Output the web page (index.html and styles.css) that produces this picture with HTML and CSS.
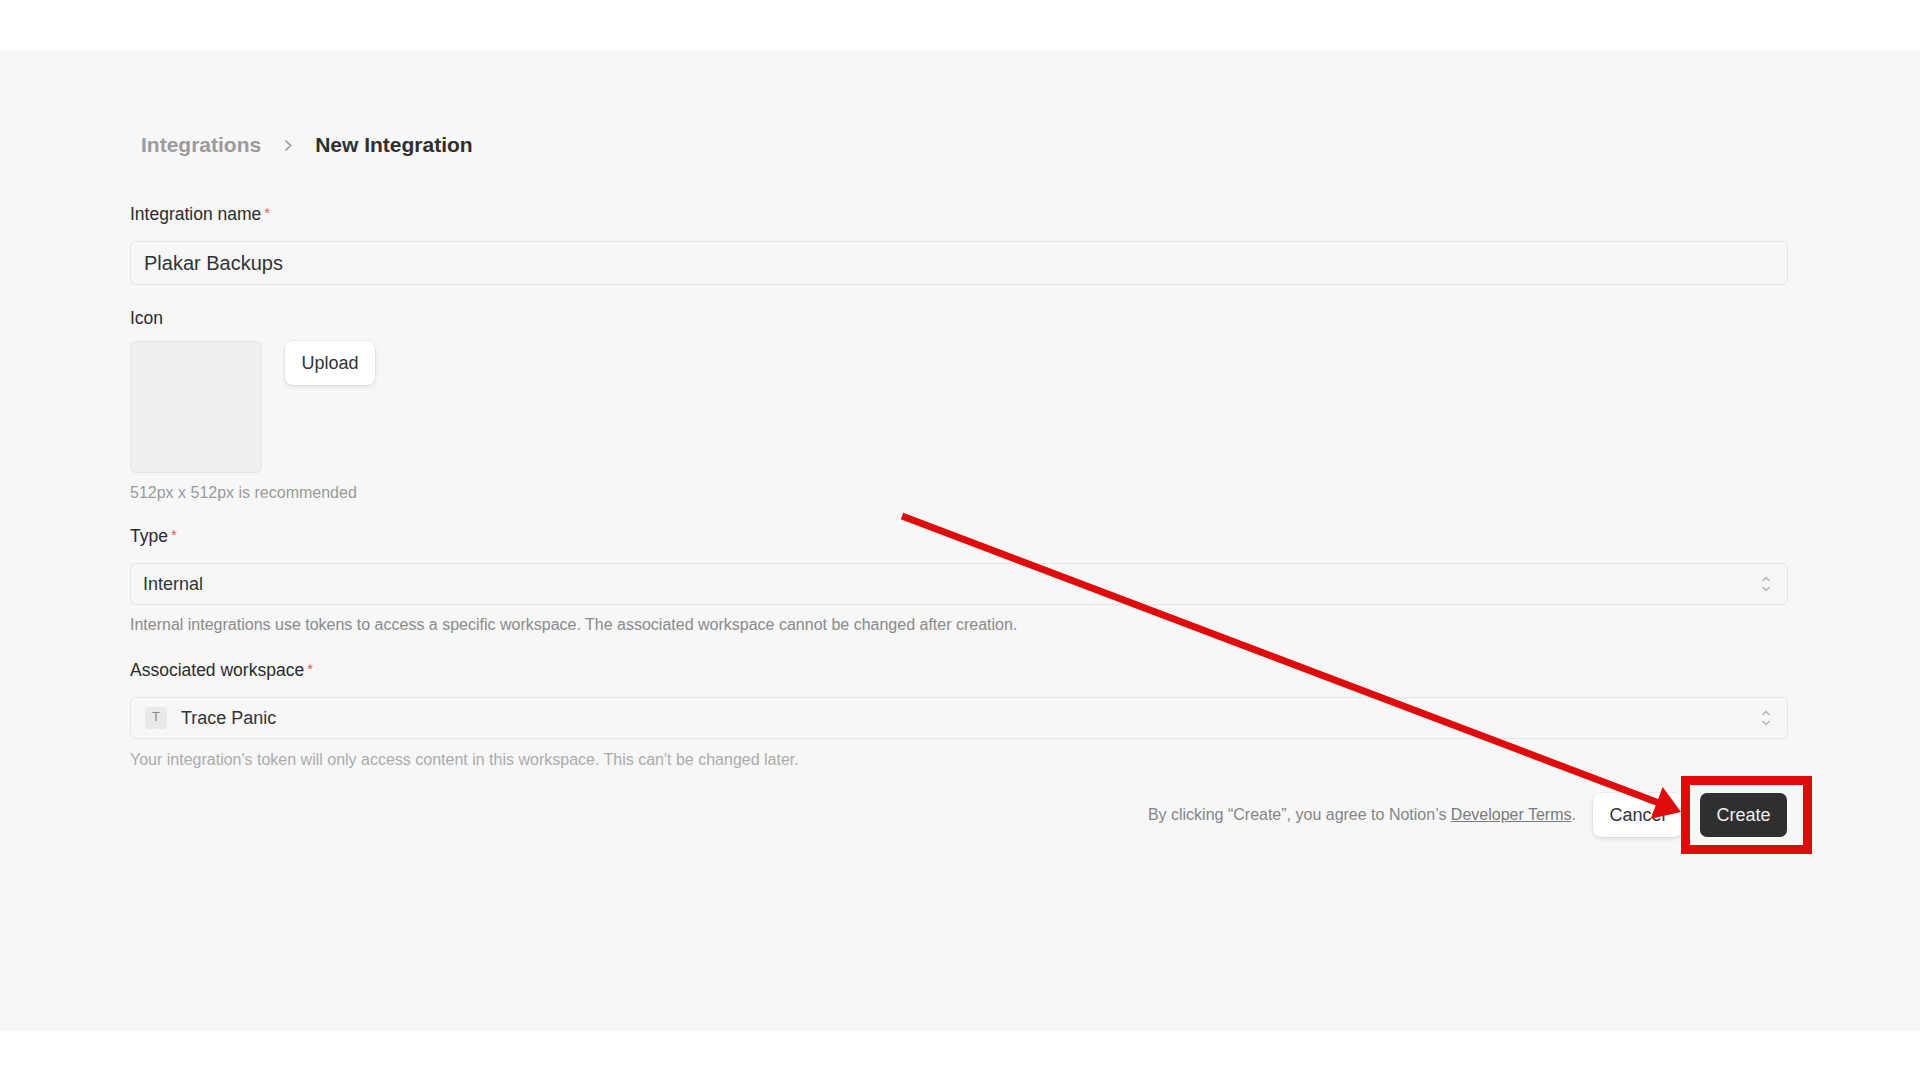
FILE: index.html
```html
<!DOCTYPE html>
<html lang="en">
<head>
    <meta charset="UTF-8">
    <meta name="viewport" content="width=device-width, initial-scale=1.0">
    <title>New Integration</title>
    <link rel="stylesheet" href="styles.css">
</head>
<body>
    <div class="page">
      <main class="content">
        <nav class="breadcrumb">
          <span class="crumb">Integrations</span>
          <svg class="crumb-sep" width="8" height="13" viewBox="0 0 8 13">
            <path d="M1.5 1.5 L6.5 6.5 L1.5 11.5" fill="none" stroke="#9a9a9a" stroke-width="1.6"/>
          </svg>
          <span class="crumb current">New Integration</span>
        </nav>

        <form class="form">
          <div class="field">
            <label for="nombre">Integration name<span class="req">*</span></label>
            <input type="text" id="nombre" class="text-input" value="Plakar Backups">
          </div>

          <div class="field field-icon">
            <label class="icon-label">Icon</label>
            <div class="icon-row">
              <div class="icon-box"></div>
              <button type="button" class="btn">Upload</button>
            </div>
            <p class="hint">512px x 512px is recommended</p>
          </div>

          <div class="field">
            <label>Type<span class="req">*</span></label>
            <div class="select">
              <span>Internal</span>
              <svg class="updown" width="10" height="18" viewBox="0 0 10 18">
                <path d="M1.5 6 L5 2.5 L8.5 6 M1.5 12 L5 15.5 L8.5 12" fill="none" stroke="#b3b3b3" stroke-width="1.5"/>
              </svg>
            </div>
            <p class="desc">Internal integrations use tokens to access a specific workspace. The associated workspace cannot be changed after creation.</p>
          </div>

          <div class="field">
            <label>Associated workspace<span class="req">*</span></label>
            <div class="select">
              <span class="ws"><span class="ws-badge">T</span>Trace Panic</span>
              <svg class="updown" width="10" height="18" viewBox="0 0 10 18">
                <path d="M1.5 6 L5 2.5 L8.5 6 M1.5 12 L5 15.5 L8.5 12" fill="none" stroke="#b3b3b3" stroke-width="1.5"/>
              </svg>
            </div>
            <p class="desc light">Your integration's token will only access content in this workspace. This can't be changed later.</p>
          </div>

          <div class="actions">
            <p class="terms">By clicking “Create”, you agree to Notion’s <a href="#">Developer Terms</a>.</p>
            <button type="button" class="btn">Cancel</button>
            <button type="submit" class="btn btn-dark">Create</button>
          </div>
        </form>
      </main>
    </div>

    <!-- annotation drawn over the screenshot -->
    <svg class="annotation" width="1920" height="1080" viewBox="0 0 1920 1080">
      <line x1="902" y1="516" x2="1659" y2="803" stroke="#e10a0a" stroke-width="7"/>
      <polygon points="1681,812 1650.7,818.7 1662.7,786.9" fill="#e10a0a"/>
      <rect x="1685.5" y="780.5" width="122" height="69" fill="none" stroke="#e10a0a" stroke-width="9"/>
    </svg>
</body>
</html>
```

FILE: styles.css
```css
* {
    margin: 0;
    padding: 0;
    box-sizing: border-box;
    font-family: "Liberation Sans", Arial, Helvetica, sans-serif;
}

body {
    background-color: #fff;
    position: relative;
    width: 1920px;
    height: 1080px;
    overflow: hidden;
}

.page {
    margin-top: 50px;
    height: 981px;
    background-color: #f7f7f7;
    padding: 81px 132px 0 130px;
}

.breadcrumb {
    display: flex;
    align-items: center;
    gap: 23px;
    padding-left: 11px;
    height: 28px;
    margin-bottom: 42px;
    font-size: 21px;
    font-weight: bold;
}

.crumb {
    color: #9b9b9b;

    &.current {
        color: #2f2f2f;
    }
}

.field {
    margin-bottom: 21px;

    label {
        display: block;
        font-size: 17.5px;
        line-height: 24px;
        color: #2b2b2b;
        margin-bottom: 15px;
    }

    .icon-label {
        margin-bottom: 11px;
    }
}

.field-icon {
    margin-bottom: 19px;
}

.req {
    color: #e45c5c;
    font-size: 15px;
    margin-left: 3px;
    vertical-align: 2px;
}

.text-input {
    display: block;
    width: 100%;
    height: 44px;
    padding: 0 13px;
    font-size: 20px;
    color: #333;
    background-color: #f7f7f7;
    border: 1.5px solid #e4e4e4;
    border-radius: 6px;
    outline: none;
}

.icon-row {
    display: flex;
    align-items: flex-start;
    gap: 23px;
}

.icon-box {
    width: 132px;
    height: 132px;
    background-color: #efefef;
    border: 1px solid #e4e4e4;
    border-radius: 6px;
}

.btn {
    height: 44px;
    padding: 0 16.5px;
    font-size: 18px;
    color: #333;
    background-color: #fff;
    border: none;
    border-radius: 8px;
    box-shadow: 0 0 0 1px rgba(0, 0, 0, 0.04), 0 2px 4px rgba(0, 0, 0, 0.1);
}

.btn-dark {
    background-color: #2f2f2f;
    color: #eee;
    border-radius: 7px;
    box-shadow: none;
}

.hint {
    margin-top: 9px;
    font-size: 16px;
    line-height: 22px;
    color: #9a9a9a;
}

.select {
    display: flex;
    align-items: center;
    justify-content: space-between;
    height: 42px;
    padding: 0 16px 0 12px;
    font-size: 18px;
    color: #333;
    border: 1.5px solid #e4e4e4;
    border-radius: 6px;
}

.ws {
    display: flex;
    align-items: center;
    gap: 14px;
    padding-left: 2px;
}

.ws-badge {
    display: flex;
    align-items: center;
    justify-content: center;
    width: 22px;
    height: 22px;
    padding-bottom: 3px;
    font-size: 13px;
    color: #888;
    background-color: #e9e9e9;
    border-radius: 4px;
}

.desc {
    margin-top: 9px;
    font-size: 16px;
    line-height: 22px;
    color: #8a8a8a;

    &.light {
        margin-top: 10px;
        color: #ababab;
    }
}

.actions {
    display: flex;
    justify-content: flex-end;
    align-items: center;
    gap: 18px;
    margin-top: 22px;
    padding-right: 1px;
}

.terms {
    margin-right: -1px;
    font-size: 16px;
    color: #858585;

    a {
        color: #7a7a7a;
    }
}

.annotation {
    position: absolute;
    top: 0;
    left: 0;
    pointer-events: none;
}
```
